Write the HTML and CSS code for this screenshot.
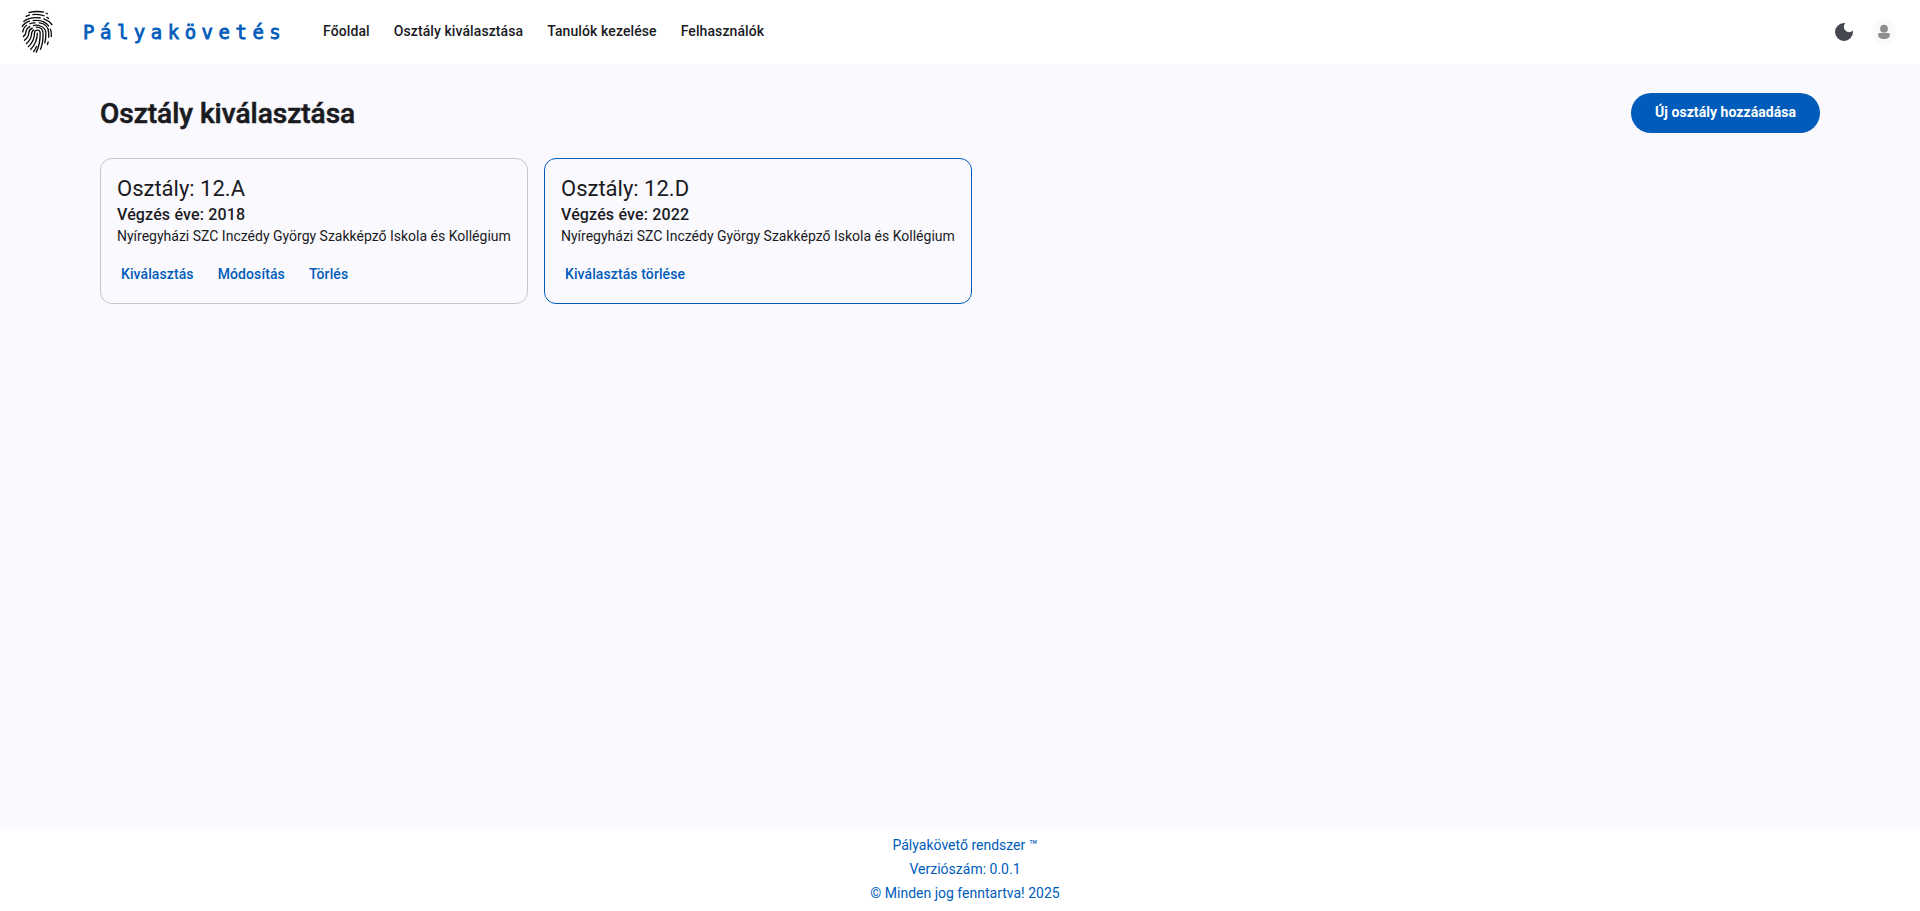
FILE: index.html
```html
<!DOCTYPE html>
<html lang="hu">
<head>
<meta charset="utf-8">
<title>Pályakövetés</title>
<link rel="stylesheet" href="styles.css">
</head>
<body>
<header class="topbar">
  <svg class="logo" viewBox="30 30 102 132" fill="none" stroke="#0c0c0c" stroke-width="4">
    <path d="M55 38Q78 32 102 36.500M107 39L114 42"/>
    <path d="M47 50Q53 46 60 44.500M67 44Q88 41 104 48M109 51L117 56"/>
    <path d="M40 65Q60 49 92 54M100 56Q117 62 127 75"/>
    <path d="M36 81Q44 67 60 63M68 62Q101 57 117 79M121 86Q125 96 124 111"/>
    <path d="M38 97Q40 82 51 75M58 72Q69 67 76 69M86 68Q116 72 116 99V113"/>
    <path d="M39 111Q48 103 48 96Q49 84 61 79M69 77Q81 73 91 78Q107 84 107.500 99Q108 116 104 130M115 124L112 135"/>
    <path d="M42 122Q56 112 56.500 98Q58 87 68 84M77 81.500Q99 81 99 99Q100 128 91 149"/>
    <path d="M48 132Q65 118 65 98A17 17 0 0 1 72 89"/>
    <path d="M54 141Q73.500 124 73.500 99A8.500 8.500 0 0 1 90.500 99Q91 133 78 158"/>
    <path d="M61 149Q82 128 82 98M70 156Q77 147 80 138"/>
  </svg>
  <span class="brand">Pályakövetés</span>
  <nav class="nav">
    <a>Főoldal</a><a>Osztály kiválasztása</a><a>Tanulók kezelése</a><a>Felhasználók</a>
  </nav>
  <div class="tools">
    <svg class="moon" viewBox="0 0 18 18"><path fill="#44474e" d="M9 0A9 9 0 1 0 18 9Q18 8.300 17.900 7.600A5 5 0 1 1 10.400.1Q9.700 0 9 0Z"/></svg>
    <svg class="avatar" viewBox="0 0 24 24"><circle cx="12" cy="12" r="12" fill="#fafafa"/><g fill="#8e8e8e"><circle cx="12" cy="8.700" r="3.900"/><path d="M7.600 13H16.400Q18 13 18 14.500C18 17.700 15.500 19.100 12 19.100S6 17.700 6 14.500Q6 13 7.600 13Z"/></g></svg>
  </div>
</header>
<main class="content">
  <div class="heading">
    <h1 class="title">Osztály kiválasztása</h1>
    <button class="add">Új osztály hozzáadása</button>
  </div>
  <div class="cards">
    <section class="card">
      <div class="name">Osztály: 12.A</div>
      <div class="year">Végzés éve: 2018</div>
      <div class="school">Nyíregyházi SZC Inczédy György Szakképző Iskola és Kollégium</div>
      <div class="actions"><a>Kiválasztás</a><a>Módosítás</a><a>Törlés</a></div>
    </section>
    <section class="card selected">
      <div class="name">Osztály: 12.D</div>
      <div class="year">Végzés éve: 2022</div>
      <div class="school">Nyíregyházi SZC Inczédy György Szakképző Iskola és Kollégium</div>
      <div class="actions"><a>Kiválasztás törlése</a></div>
    </section>
  </div>
</main>
<footer class="footer">
  <div>Pályakövető rendszer ™</div>
  <div>Verziószám: 0.0.1</div>
  <div>© Minden jog fenntartva! 2025</div>
</footer>
</body>
</html>
```
FILE: styles.css
```css
* { box-sizing: border-box; }
body {
  margin: 0;
  height: 100vh;
  display: flex;
  flex-direction: column;
  background: #faf9fd;
  color: #1a1b1f;
  font: 14px/20px Roboto, sans-serif;
}
.topbar {
  height: 64px;
  flex: none;
  display: flex;
  align-items: center;
  background: #fff;
  padding: 0 24px 0 20px;
}
.logo { width: 34px; height: 44px; }
.brand {
  margin-left: 29px;
  width: 204px;
  color: #005cbb;
  font: 19px/24px "DejaVu Sans Mono", monospace;
  -webkit-text-stroke: 0.8px #005cbb;
  letter-spacing: 5.5px;
  white-space: nowrap;
}
.nav {
  display: flex;
  gap: 24px;
  margin-left: 36px;
  padding-bottom: 2px;
  font-weight: 500;
  letter-spacing: 0.096px;
}
.tools { display: flex; align-items: center; gap: 19px; margin-left: auto; }
.moon { width: 18px; height: 18px; }
.avatar { width: 24px; height: 24px; }
.content { flex: 1; padding: 29px 100px 0; }
.heading { display: flex; justify-content: space-between; align-items: center; height: 40px; }
.title {
  margin: 0;
  padding-top: 2px;
  font-size: 28px;
  font-weight: 500;
  -webkit-text-stroke: 0.6px #1a1b1f;
  line-height: 40px;
  letter-spacing: 0;
}
.add {
  width: 189px;
  height: 40px;
  border: 0;
  border-radius: 20px;
  padding: 0 0 2px;
  background: #005cbb;
  color: #fff;
  font: bold 14px/20px Roboto, sans-serif;
  letter-spacing: 0.05px;
}
.cards { display: flex; gap: 16px; margin-top: 25px; }
.card {
  width: 428px;
  height: 146px;
  border: 1px solid #c4c6d0;
  border-radius: 12px;
  padding: 16px;
  white-space: nowrap;
}
.selected { border-color: #005cbb; }
.name { font-size: 22px; line-height: 28px; }
.year { font-size: 16px; line-height: 24px; font-weight: 500; letter-spacing: 0.15px; }
.school { line-height: 18px; }
.actions {
  display: flex;
  gap: 24px;
  padding: 19px 4px 0;
  color: #005cbb;
  font-weight: 500;
  letter-spacing: 0.1px;
}
.footer {
  height: 82px;
  flex: none;
  padding: 4px 0 0 10px;
  background: #fff;
  color: #005cbb;
  text-align: center;
  line-height: 24px;
}
```
